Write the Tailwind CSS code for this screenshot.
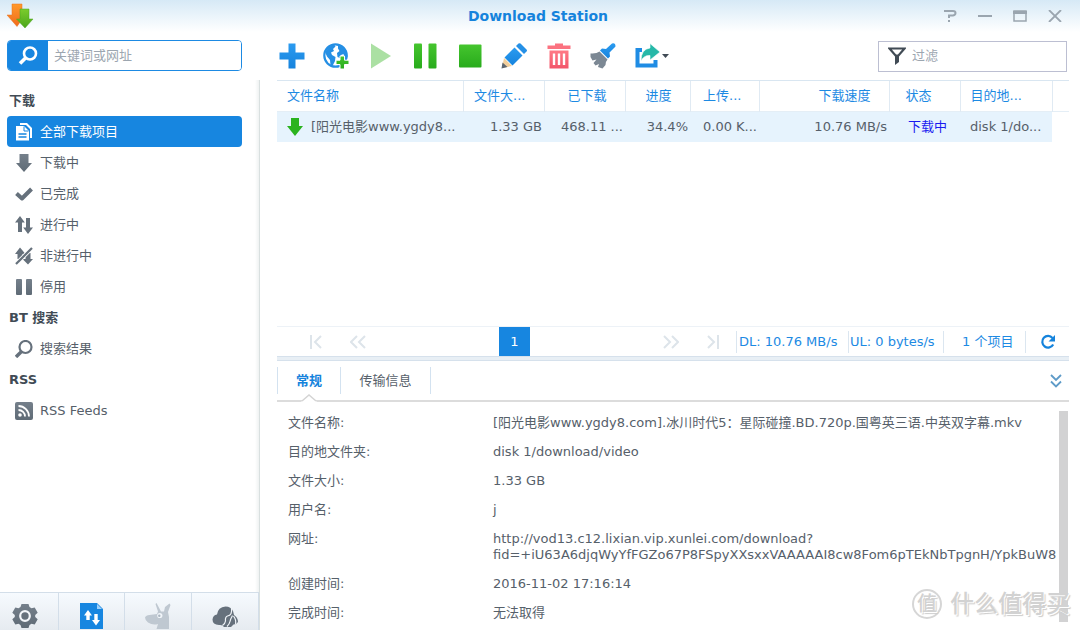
<!DOCTYPE html>
<html lang="zh-CN">
<head>
<meta charset="utf-8">
<title>Download Station</title>
<script src="https://cdn.jsdelivr.net/npm/@tailwindcss/browser@4"></script>
</head>
<body class="relative flex h-screen flex-col overflow-hidden bg-white font-['DejaVu_Sans','Noto_Sans_CJK_SC',sans-serif] text-[13px] leading-4 text-[#56606a]">
<svg width="0" height="0" class="absolute" aria-hidden="true">
  <defs>
    <linearGradient id="blue" x1="0" y1="0" x2="0" y2="1"><stop offset="0" stop-color="#2b9bf0"/><stop offset="1" stop-color="#1683dd"/></linearGradient>
    <linearGradient id="green" x1="0" y1="0" x2="0" y2="1"><stop offset="0" stop-color="#45c52e"/><stop offset="1" stop-color="#28ab1c"/></linearGradient>
    <linearGradient id="red" x1="0" y1="0" x2="0" y2="1"><stop offset="0" stop-color="#ff7a86"/><stop offset="1" stop-color="#f2566a"/></linearGradient>
    <linearGradient id="orange" x1="0" y1="0" x2="0" y2="1"><stop offset="0" stop-color="#ff9a2c"/><stop offset="1" stop-color="#ef6a1c"/></linearGradient>
    <linearGradient id="lime" x1="0" y1="0" x2="0" y2="1"><stop offset="0" stop-color="#7ccc2c"/><stop offset="1" stop-color="#4aa51c"/></linearGradient>
    <linearGradient id="grey" x1="0" y1="0" x2="0" y2="1"><stop offset="0" stop-color="#75808b"/><stop offset="1" stop-color="#5f6b76"/></linearGradient>
  </defs>
</svg>

<header class="flex h-8 shrink-0 items-center bg-linear-to-b from-[#d6e9f6] to-white">
  <div class="w-[140px] pl-1.5">
    <svg class="h-[28px] w-[28px]" viewBox="0 0 28 28"><path d="M6 2h10v8h5L11 24.500 1 13h5z" fill="url(#orange)" stroke="#e9701e" stroke-width=".5"/><path d="M14 7h9v10h4L19 26 10.500 17H14z" fill="url(#lime)" stroke="#4aa51c" stroke-width=".5"/></svg>
  </div>
  <h1 class="flex-1 pr-1 text-center text-sm font-bold text-[#1583dc]">Download Station</h1>
  <div class="flex w-[140px] justify-end gap-[14px] pr-[15px]">
    <button aria-label="帮助" class="grid h-5 w-[21px] place-items-center"><svg class="h-3 w-3.5" viewBox="0 0 14 12" fill="none" stroke="#9aa5af" stroke-width="2"><path d="M1 1h9q2.500 0 2.500 2T10 5.500H6V8M6 10v2"/></svg></button>
    <button aria-label="最小化" class="grid h-5 w-[21px] place-items-center"><svg class="h-3 w-3.5" viewBox="0 0 14 12" fill="none" stroke="#9aa5af" stroke-width="2"><path d="M0 6h14"/></svg></button>
    <button aria-label="最大化" class="grid h-5 w-[21px] place-items-center"><svg class="h-3 w-3.5" viewBox="0 0 14 12" fill="none" stroke="#9aa5af"><path d="M1 1h12v10H1z" stroke-width="1.500"/><path d="M0 2.500h14" stroke-width="3"/></svg></button>
    <button aria-label="关闭" class="grid h-5 w-[21px] place-items-center"><svg class="h-3 w-3.5" viewBox="0 0 14 12" fill="none" stroke="#9aa5af" stroke-width="1.800"><path d="M1 0l12 12M13 0L1 12"/></svg></button>
  </div>
</header>

<div class="flex min-h-0 flex-1">
  <aside class="flex w-[260px] shrink-0 flex-col">
    <div class="h-12 pt-2 pr-[18px] pl-[7px]">
      <div class="flex h-[31px] overflow-hidden rounded border border-[#1d8ae3]">
        <button aria-label="搜索" class="grid w-10 place-items-center bg-[#1786e0]"><svg class="h-5 w-5" viewBox="0 0 20 20" fill="none" stroke="#fff"><circle cx="12" cy="7.500" r="6" stroke-width="2.600"/><path d="M7.500 12L2 17.500" stroke-width="3.500"/></svg></button>
        <input aria-label="关键词或网址" placeholder="关键词或网址" class="min-w-0 flex-1 bg-white px-1.5 placeholder-[#9ca6b0] outline-none">
      </div>
    </div>
    <div class="flex flex-1 flex-col border-r border-[#d9e0e0] bg-linear-to-l from-[#eff2f2] via-white via-[4px] to-white">
      <nav class="flex-1 pt-[5px] pr-[17px] pl-[7px]">
        <h2 class="flex h-[31px] items-center pl-0.5 font-bold text-[#414b55]">下载</h2>
        <a href="#all" class="flex h-[31px] items-center gap-[7px] rounded bg-[#1786e0] pl-2 text-white"><svg class="h-[18px] w-[18px]" viewBox="0 0 18 18"><path d="M5 0h7l5 5v10h-2V6l-4-4H5z" fill="#fff"/><path d="M1 3h8l5 5v9.500H1z" fill="#fff"/><path d="M9 3.500V8h4.500" stroke="#1786e0" fill="none"/><path d="M3.500 11h8M3.500 14h8" stroke="#1786e0" stroke-width="1.300"/></svg>全部下载项目</a>
        <a href="#downloading" class="flex h-[31px] items-center gap-[7px] pl-2"><svg class="h-[18px] w-[18px]" viewBox="0 0 18 18"><path d="M4.500 0h9v9H17l-8 9L1 9h3.500z" fill="url(#grey)"/></svg>下载中</a>
        <a href="#done" class="flex h-[31px] items-center gap-[7px] pl-2"><svg class="h-[18px] w-[18px]" viewBox="0 0 18 18"><path d="M1.500 8.500l5.500 5L16.500 4" stroke="#66717c" stroke-width="4" fill="none" stroke-linejoin="round"/></svg>已完成</a>
        <a href="#active" class="flex h-[31px] items-center gap-[7px] pl-2"><svg class="h-[18px] w-[18px]" viewBox="0 0 18 18" fill="#66717c"><path d="M5 0l4.800 6.500H7V16H3V6.500H0zM11 2h4v9.500h3L13 18 8.200 11.500H11z"/></svg>进行中</a>
        <a href="#inactive" class="flex h-[31px] items-center gap-[7px] pl-2"><svg class="h-[18px] w-[18px]" viewBox="0 0 18 18"><path d="M5 .5L10.500 7H7.500v5h-5V7H0zM10.500 6h5v6H18l-5 5.500L7.500 12h3z" fill="#66717c"/><path d="M1 17L17 1" stroke="#fff" stroke-width="4"/><path d="M1 17L17 1" stroke="#66717c" stroke-width="2.200"/></svg>非进行中</a>
        <a href="#stopped" class="flex h-[31px] items-center gap-[7px] pl-2"><svg class="h-[18px] w-[18px]" viewBox="0 0 18 18" fill="url(#grey)"><rect x="1" y="1" width="6" height="16" rx="1"/><rect x="11" y="1" width="6" height="16" rx="1"/></svg>停用</a>
        <h2 class="flex h-[31px] items-center pl-0.5 font-bold text-[#414b55]">BT 搜索</h2>
        <a href="#results" class="flex h-[31px] items-center gap-[7px] pl-2"><svg class="h-[18px] w-[18px]" viewBox="0 0 18 18" fill="none" stroke="#66717c"><circle cx="10.500" cy="7" r="6" stroke-width="2.200"/><path d="M6.500 11.500L1 17" stroke-width="3.400"/></svg>搜索结果</a>
        <h2 class="flex h-[31px] items-center pl-0.5 font-bold text-[#414b55]">RSS</h2>
        <a href="#rss" class="flex h-[31px] items-center gap-[7px] pl-2"><svg class="h-[18px] w-[18px]" viewBox="0 0 18 18"><rect width="18" height="18" rx="2" fill="url(#grey)"/><circle cx="5" cy="13" r="1.800" fill="#fff"/><path d="M3.500 8a6.500 6.500 0 016.500 6.500M3.500 4A10.500 10.500 0 0114 14.500" stroke="#fff" stroke-width="1.800" fill="none"/></svg>RSS Feeds</a>
      </nav>
      <div class="grid h-[38px] grid-cols-[59px_1fr_1fr_1fr] divide-x divide-[#d3dee9] border-t border-r border-[#d3dee9] bg-linear-to-b from-[#f6fafe] to-[#e6ebf0]">
        <button aria-label="设置" class="flex justify-center pt-2.5 pr-2"><svg class="h-[26px] w-[26px]" viewBox="0 0 26 26"><path d="M9.500 1h7l1 3 2 1.200 3.200-.8 3 5.300-2.500 2.300v2l2.500 2.300-3 5.300-3.200-.8-2 1.200-1 3h-7l-1-3-2-1.200-3.200.8-3-5.300L2.800 14v-2L.3 9.700l3-5.300 3.200.8 2-1.200z" fill="url(#grey)"/><circle cx="13" cy="13" r="4.800" fill="#66717c" stroke="#f3f6fa" stroke-width="2.200"/></svg></button>
        <button aria-label="下载任务" class="flex justify-center pt-2.5"><svg class="h-[26px] w-[23px]" viewBox="0 0 23 26"><path d="M0 0h17l6 6v20H0z" fill="#1786e0"/><path d="M17 1v5h5" fill="#9dd0fa"/><path d="M8 7l4 5.500h-2.300V17H6.300v-4.500H4zM14.300 11h3.400v6H20l-4 5.500-4-5.500h2.300z" fill="#fff"/></svg></button>
        <button aria-label="eMule" class="flex justify-center pt-2.5"><svg class="h-[26px] w-[26px]" viewBox="0 0 26 26"><path d="M0 14.500Q1 12 4.500 12L12 11l1-2.500L10.500 1l1-1L16 8.500h3L20 4l4.500-3.500L25.500 2 23 9l1 5v12H11.500l1.500-5q-5.500 1.500-10-1.500Q0 17 0 14.500z" fill="#bfc8d1"/><circle cx="14.800" cy="12.500" r="2.600" fill="#f1f5f9"/><circle cx="14.300" cy="12.800" r="1.200" fill="#aab5c0"/></svg></button>
        <button aria-label="迅雷" class="flex justify-center pt-3"><svg class="h-[24px] w-[26px]" viewBox="0 0 26 24"><path d="M.5 14.500Q1 10 5 9.500 6 2 13.500 1.500 19 1.500 21 6l1 4q4 2.500 4 7l-2 2-2.500.5L19 22h-7q-1.500-2.500-5-2-6.500-.5-6.500-5.500z" fill="#66717c"/><path d="M19.500 3q1 7.500-4 8-2.500 1-2 5-.5 3-3 4.500M20.500 10.500q-2 3.500-2.500 6t-3 5M21.500 11q3 4 2 8" fill="none" stroke="#f1f5f9" stroke-width="1.200"/></svg></button>
      </div>
    </div>
  </aside>

  <main class="flex min-w-0 flex-1 flex-col pr-[11px] pl-[17px]">
    <div class="flex h-12 shrink-0 items-center">
      <div class="flex w-[341px] justify-between">
        <button aria-label="新增" class="grid w-[30px] place-items-center"><svg class="h-[26px] w-[26px]" viewBox="0 0 26 26"><path d="M9.500.5h7v9h9v7h-9v9h-7v-9h-9v-7h9z" fill="url(#blue)"/></svg></button>
        <button aria-label="新增网址" class="grid w-[30px] place-items-center"><svg class="h-[26px] w-[26px]" viewBox="0 0 26 26"><circle cx="12.500" cy="12.500" r="11.200" fill="#fff" stroke="#258fe4" stroke-width="2.200"/><path d="M2 9l4-5 5-2.500 1.500 2L10 6l1 2-3 1.500 1 2.500 3.500 2-.5 4-2.500 5-2-1-.5-5-3-3.500zM15 2l6 2.500L24 9l.5 5-3 1-1-4-2.500 1-1 3-2.500-1-.5-4 2.500-2-1.500-2.500z" fill="#258fe4"/><path d="M17 13h4.500v4.200H26v4.300h-4.500V26H17v-4.500h-4v-4.300h4z" fill="url(#green)" stroke="#fff"/></svg></button>
        <button aria-label="继续" class="grid w-[30px] place-items-center"><svg class="h-[26px] w-[26px]" viewBox="0 0 26 26"><path d="M3 .5L23 13 3 25.500z" fill="#abe0a3"/></svg></button>
        <button aria-label="暂停" class="grid w-[30px] place-items-center"><svg class="h-[26px] w-[26px]" viewBox="0 0 26 26" fill="url(#green)"><rect x="2" y=".5" width="8" height="25" rx="1"/><rect x="16.500" y=".5" width="8" height="25" rx="1"/></svg></button>
        <button aria-label="停止" class="grid w-[30px] place-items-center"><svg class="h-[26px] w-[26px]" viewBox="0 0 26 26"><rect x="2" y="1.500" width="22.500" height="23" rx="1" fill="url(#green)"/></svg></button>
        <button aria-label="编辑" class="grid w-[30px] place-items-center"><svg class="h-[26px] w-[26px]" viewBox="0 0 26 26"><path d="M3.500 14.500L13.500 4.500l8 8L11.500 22.500z" fill="url(#blue)"/><path d="M15 3l2.500-2.500q1-.7 2 0L25.500 6.500q1 1 0 2L23 11z" fill="#2590e6"/><path d="M3 15l8 8-10 2z" fill="#f2cf9c"/><path d="M1.500 19.500L6.500 24l-6 1.500z" fill="#5c6670"/></svg></button>
        <button aria-label="删除" class="grid w-[30px] place-items-center"><svg class="h-[26px] w-[26px]" viewBox="0 0 26 26"><path d="M9 .5h8v2h7.500v3.500h-23V2.500H9z" fill="#fb7280"/><path d="M3.500 7.500h19v18h-19z" fill="url(#red)"/><path d="M8 10.500v11.500M13 10.500v11.500M18 10.500v11.500" stroke="#fff" stroke-width="2.400"/></svg></button>
        <button aria-label="清除已完成" class="grid w-[30px] place-items-center"><svg class="h-[26px] w-[26px]" viewBox="0 0 26 26"><path d="M25.500 3.500L19.500 9.500l.5 4-2 2-8-8 2-2 4 .5 6-5.500q3.500-1 3.500 3z" fill="url(#blue)"/><path d="M9.500 8.500l8 8q-2 2-2 5.500L12.500 25.500 8 24l1-3-3.500 1.500-2-2.500 3-3.500-4 1L.5 14V10.500q6 .500 9-2z" fill="#7c8894"/></svg></button>
      </div>
      <button aria-label="分享" class="ml-4 flex items-center"><svg class="h-[26px] w-[26px]" viewBox="0 0 26 26"><path d="M8 7H3.500v15.500h18V17" fill="none" stroke="#1f8ce4" stroke-width="4"/><path d="M16 .5L26 9l-10 8v-4.500q-6-.500-9 5.500 0-12 9-13z" fill="#26b8a8" stroke="#fff" stroke-width=".6"/></svg><svg class="ml-0.5 h-1 w-[7px]" viewBox="0 0 7 4"><path d="M0 0h7L3.500 4z" fill="#414b55"/></svg></button>
      <label class="mr-0.5 ml-auto flex h-[31px] w-[189px] items-center gap-1 border border-[#bcbfd2] pl-[9px]">
        <svg class="h-[18px] w-[18px] shrink-0" viewBox="0 0 18 18"><path d="M1.500 1.500h15L10.500 8.500h-3z" fill="none" stroke="#414b55" stroke-width="2.200"/><path d="M7 8h4v7l-4 3z" fill="#414b55"/></svg>
        <input aria-label="过滤" placeholder="过滤" class="min-w-0 flex-1 bg-transparent pl-0.5 placeholder-[#9ca6b0] outline-none">
      </label>
    </div>

    <div class="min-h-0 flex-1 border-t border-[#d9e6f1]">
      <table class="w-full table-fixed border-collapse whitespace-nowrap">
        <colgroup><col><col class="w-[81px]"><col class="w-[81px]"><col class="w-[65px]"><col class="w-[69px]"><col class="w-[130px]"><col class="w-[71px]"><col class="w-[92px]"><col class="w-[17px]"></colgroup>
        <thead class="text-[#1d8ae3]">
          <tr class="h-[30px] border-b border-[#e4eef6] [&>th]:border-r [&>th]:border-[#e0eaf3] [&>th]:font-normal">
            <th class="pl-2.5 text-left">文件名称</th><th class="pr-[18px] text-right">文件大...</th><th class="pr-[18px] text-right">已下载</th><th class="pr-[18px] text-right">进度</th><th class="pr-[17px] text-right">上传...</th><th class="pr-[18px] text-right">下载速度</th><th class="pl-4 text-left">状态</th><th class="pl-2.5 text-left">目的地...</th><td></td>
          </tr>
        </thead>
        <tbody>
          <tr class="h-[31px] [&>td]:bg-[#e6f3fd] [&>td:last-child]:bg-white">
            <td class="pl-2.5"><div class="flex items-center gap-2"><svg class="h-[18px] w-4 shrink-0" viewBox="0 0 16 18"><path d="M4 0h8v8h4l-8 10L0 8h4z" fill="#2bb31f"/></svg><span>[阳光电影www.ygdy8...</span></div></td>
            <td class="pr-0.5 text-right">1.33 GB</td><td class="pr-0.5 text-right">468.11 ...</td><td class="pr-0.5 text-right">34.4%</td><td class="pr-0.5 text-right">0.00 K...</td><td class="pr-0.5 text-right">10.76 MB/s</td><td class="pl-[19px] text-[#1a1af0]">下载中</td><td class="pl-2.5">disk 1/do...</td><td></td>
          </tr>
        </tbody>
      </table>
    </div>

    <div class="flex h-[30px] shrink-0 items-center whitespace-nowrap border-t border-[#edf2f7] text-[#1d8ae3]">
      <div class="flex flex-1 items-center justify-between pr-[13px] pl-[29px]">
        <div class="flex gap-[22px]">
          <button aria-label="第一页" class="grid h-5 w-5 place-items-center"><svg class="h-3.5 w-3.5" viewBox="0 0 14 14" fill="none" stroke="#dde4ea" stroke-width="2"><path d="M2 0v14M12 1L6 7l6 6"/></svg></button>
          <button aria-label="上一页" class="grid h-5 w-5 place-items-center"><svg class="h-3.5 w-4" viewBox="0 0 16 14" fill="none" stroke="#dde4ea" stroke-width="2"><path d="M7 1L1 7l6 6M15 1L9 7l6 6"/></svg></button>
        </div>
        <button class="h-[29px] w-[31px] bg-[#1786e0] text-white">1</button>
        <div class="flex gap-[22px]">
          <button aria-label="下一页" class="grid h-5 w-5 place-items-center"><svg class="h-3.5 w-4" viewBox="0 0 16 14" fill="none" stroke="#dde4ea" stroke-width="2"><path d="M1 1l6 6-6 6M9 1l6 6-6 6"/></svg></button>
          <button aria-label="最后一页" class="grid h-5 w-5 place-items-center"><svg class="h-3.5 w-3.5" viewBox="0 0 14 14" fill="none" stroke="#dde4ea" stroke-width="2"><path d="M12 0v14M2 1l6 6-6 6"/></svg></button>
        </div>
      </div>
      <span class="flex h-[22px] w-28 items-center border-l border-[#dbe6f0] pl-0.5">DL: 10.76 MB/s</span>
      <span class="flex h-[22px] w-[95px] items-center border-l border-[#dbe6f0] pl-px">UL: 0 bytes/s</span>
      <span class="flex h-[22px] w-[82px] items-center border-l border-[#dbe6f0] pl-[18px]">1 个项目</span>
      <button aria-label="刷新" class="grid h-[22px] w-[44px] place-items-center border-l border-[#dbe6f0]"><svg class="h-4 w-4" viewBox="0 0 16 16"><path d="M13.200 10.500A5.800 5.800 0 1112.500 4" fill="none" stroke="#1583dc" stroke-width="2.200"/><path d="M15 1v6.500H8.500z" fill="#1583dc"/></svg></button>
    </div>
    <div class="h-[5px] shrink-0 border-y border-[#d6e1ec] bg-[#e8eff5]"></div>

    <div class="relative flex h-[41px] shrink-0 items-center border-b-2 border-[#dcdcdc]">
      <button class="h-[27px] w-[63px] border-l border-[#d3e2f0] font-bold text-[#1583dc]">常规</button>
      <button class="h-[27px] w-[91px] border-x border-[#d3e2f0]">传输信息</button>
      <button aria-label="收起" class="mr-[7px] ml-auto"><svg class="h-3.5 w-3" viewBox="0 0 12 14" fill="none" stroke="#5e9bc8" stroke-width="1.800"><path d="M1 1l5 5 5-5M1 7.500l5 5 5-5"/></svg></button>
      <svg class="absolute -bottom-0.5 left-6 h-2 w-4" viewBox="0 0 16 8"><path d="M0 8l8-7 8 7" fill="#fff"/><path d="M1 7l7-6 7 6" fill="none" stroke="#d4d4d4" stroke-width="1.500"/></svg>
    </div>

    <section class="relative h-[228px] shrink-0 overflow-hidden pt-[13px]">
      <div aria-hidden="true" class="absolute top-[9px] right-px h-[211px] w-[9px] bg-[#d2d2d3]"></div>
      <dl class="relative grid grid-cols-[205px_1fr] gap-y-[13px] whitespace-nowrap pl-[11px]">
        <dt>文件名称:</dt><dd>[阳光电影www.ygdy8.com].冰川时代5：星际碰撞.BD.720p.国粤英三语.中英双字幕.mkv</dd>
        <dt>目的地文件夹:</dt><dd>disk 1/download/video</dd>
        <dt>文件大小:</dt><dd>1.33 GB</dd>
        <dt>用户名:</dt><dd>j</dd>
        <dt>网址:</dt><dd>http://vod13.c12.lixian.vip.xunlei.com/download?<br>fid=+iU63A6djqWyYfFGZo67P8FSpyXXsxxVAAAAAI8cw8Fom6pTEkNbTpgnH/YpkBuW8</dd>
        <dt>创建时间:</dt><dd>2016-11-02 17:16:14</dd>
        <dt>完成时间:</dt><dd>无法取得</dd>
      </dl>
    </section>
  </main>
</div>

<div class="pointer-events-none absolute right-[10px] bottom-[10px] flex items-center gap-2 whitespace-nowrap text-2xl leading-8 text-[#d2d2d2] [text-shadow:1px_1px_0_#fff,2px_2px_1px_#ccc]">
  <span class="grid h-[30px] w-[30px] place-items-center rounded-full border-2 border-[#d6d6d6] text-xl leading-6 font-medium">值</span>
  <span class="font-medium">什么值得买</span>
</div>
</body>
</html>
